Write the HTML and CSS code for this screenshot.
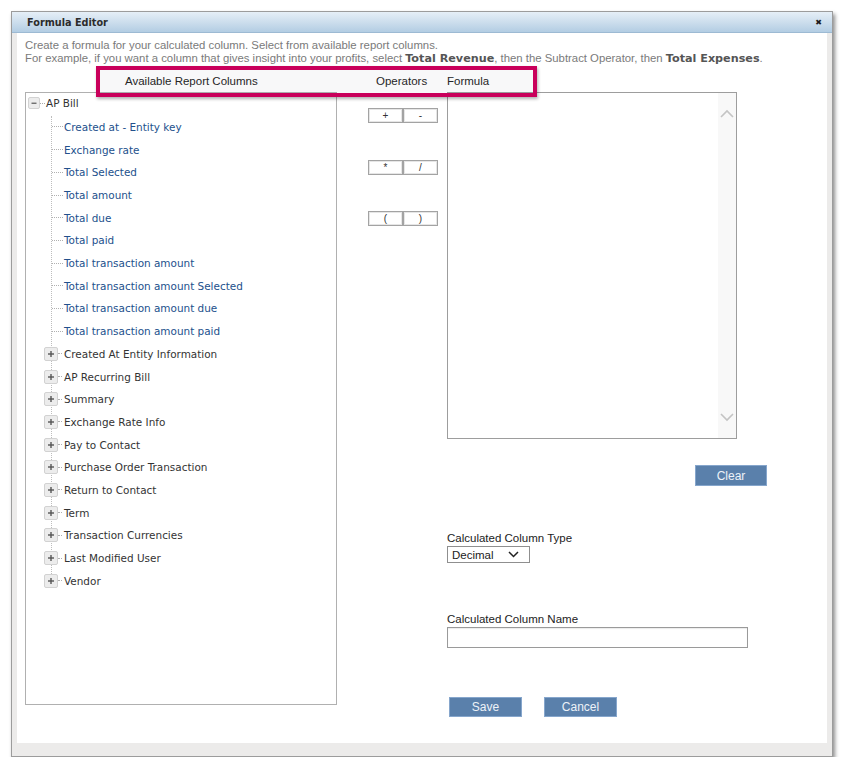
FILE: index.html
```html
<!DOCTYPE html>
<html>
<head>
<meta charset="utf-8">
<title>Formula Editor</title>
<link rel="stylesheet" href="styles.css">
</head>
<body>
<div class="dialog">
  <div class="titlebar">
    <span class="title">Formula Editor</span>
    <span class="close">&#x2716;</span>
  </div>
  <div class="content">
    <p class="desc">Create a formula for your calculated column. Select from available report columns.<br>For example, if you want a column that gives insight into your profits, select <b>Total Revenue</b>, then the Subtract Operator, then <b>Total Expenses</b>.</p>
    <div class="headrow">
      <span class="h-cols">Available Report Columns</span>
      <span class="h-ops">Operators</span>
      <span class="h-formula">Formula</span>
    </div>
    <div class="highlight"></div>
    <div class="main">
      <div class="tree">
        <div class="root">
          <span class="ico minus"><svg width="12" height="12" viewBox="0 0 12 12"><rect x="3" y="5.5" width="6" height="1.6" fill="#666"/></svg></span>
          <span class="rconn"></span>
          <span class="group-label">AP Bill</span>
        </div>
        <ul class="branch">
          <li class="leaf"><span class="conn"></span><span class="leaf-label">Created at - Entity key</span></li>
          <li class="leaf"><span class="conn"></span><span class="leaf-label">Exchange rate</span></li>
          <li class="leaf"><span class="conn"></span><span class="leaf-label">Total Selected</span></li>
          <li class="leaf"><span class="conn"></span><span class="leaf-label">Total amount</span></li>
          <li class="leaf"><span class="conn"></span><span class="leaf-label">Total due</span></li>
          <li class="leaf"><span class="conn"></span><span class="leaf-label">Total paid</span></li>
          <li class="leaf"><span class="conn"></span><span class="leaf-label">Total transaction amount</span></li>
          <li class="leaf"><span class="conn"></span><span class="leaf-label">Total transaction amount Selected</span></li>
          <li class="leaf"><span class="conn"></span><span class="leaf-label">Total transaction amount due</span></li>
          <li class="leaf"><span class="conn"></span><span class="leaf-label">Total transaction amount paid</span></li>
          <li class="node"><span class="ico plus"><svg width="14" height="14" viewBox="0 0 14 14"><rect x="3.5" y="6.2" width="7" height="1.6" fill="#555"/><rect x="6.2" y="3.5" width="1.6" height="7" fill="#555"/></svg></span><span class="gconn"></span><span class="group-label">Created At Entity Information</span></li>
          <li class="node"><span class="ico plus"><svg width="14" height="14" viewBox="0 0 14 14"><rect x="3.5" y="6.2" width="7" height="1.6" fill="#555"/><rect x="6.2" y="3.5" width="1.6" height="7" fill="#555"/></svg></span><span class="gconn"></span><span class="group-label">AP Recurring Bill</span></li>
          <li class="node"><span class="ico plus"><svg width="14" height="14" viewBox="0 0 14 14"><rect x="3.5" y="6.2" width="7" height="1.6" fill="#555"/><rect x="6.2" y="3.5" width="1.6" height="7" fill="#555"/></svg></span><span class="gconn"></span><span class="group-label">Summary</span></li>
          <li class="node"><span class="ico plus"><svg width="14" height="14" viewBox="0 0 14 14"><rect x="3.5" y="6.2" width="7" height="1.6" fill="#555"/><rect x="6.2" y="3.5" width="1.6" height="7" fill="#555"/></svg></span><span class="gconn"></span><span class="group-label">Exchange Rate Info</span></li>
          <li class="node"><span class="ico plus"><svg width="14" height="14" viewBox="0 0 14 14"><rect x="3.5" y="6.2" width="7" height="1.6" fill="#555"/><rect x="6.2" y="3.5" width="1.6" height="7" fill="#555"/></svg></span><span class="gconn"></span><span class="group-label">Pay to Contact</span></li>
          <li class="node"><span class="ico plus"><svg width="14" height="14" viewBox="0 0 14 14"><rect x="3.5" y="6.2" width="7" height="1.6" fill="#555"/><rect x="6.2" y="3.5" width="1.6" height="7" fill="#555"/></svg></span><span class="gconn"></span><span class="group-label">Purchase Order Transaction</span></li>
          <li class="node"><span class="ico plus"><svg width="14" height="14" viewBox="0 0 14 14"><rect x="3.5" y="6.2" width="7" height="1.6" fill="#555"/><rect x="6.2" y="3.5" width="1.6" height="7" fill="#555"/></svg></span><span class="gconn"></span><span class="group-label">Return to Contact</span></li>
          <li class="node"><span class="ico plus"><svg width="14" height="14" viewBox="0 0 14 14"><rect x="3.5" y="6.2" width="7" height="1.6" fill="#555"/><rect x="6.2" y="3.5" width="1.6" height="7" fill="#555"/></svg></span><span class="gconn"></span><span class="group-label">Term</span></li>
          <li class="node"><span class="ico plus"><svg width="14" height="14" viewBox="0 0 14 14"><rect x="3.5" y="6.2" width="7" height="1.6" fill="#555"/><rect x="6.2" y="3.5" width="1.6" height="7" fill="#555"/></svg></span><span class="gconn"></span><span class="group-label">Transaction Currencies</span></li>
          <li class="node"><span class="ico plus"><svg width="14" height="14" viewBox="0 0 14 14"><rect x="3.5" y="6.2" width="7" height="1.6" fill="#555"/><rect x="6.2" y="3.5" width="1.6" height="7" fill="#555"/></svg></span><span class="gconn"></span><span class="group-label">Last Modified User</span></li>
          <li class="node"><span class="ico plus"><svg width="14" height="14" viewBox="0 0 14 14"><rect x="3.5" y="6.2" width="7" height="1.6" fill="#555"/><rect x="6.2" y="3.5" width="1.6" height="7" fill="#555"/></svg></span><span class="gconn"></span><span class="group-label">Vendor</span></li>
        </ul>
      </div>
      <div class="ops">
        <div class="oprow"><span class="opbtn">+</span><span class="opbtn">-</span></div>
        <div class="oprow"><span class="opbtn">*</span><span class="opbtn">/</span></div>
        <div class="oprow"><span class="opbtn">(</span><span class="opbtn">)</span></div>
      </div>
      <div class="right">
        <div class="formula">
          <div class="scroll">
            <svg width="14" height="9" viewBox="0 0 14 9"><path d="M1 8 L7 2 L13 8" fill="none" stroke="#c4c4c4" stroke-width="1.6"/></svg>
            <svg width="14" height="9" viewBox="0 0 14 9"><path d="M1 1 L7 7 L13 1" fill="none" stroke="#c4c4c4" stroke-width="1.6"/></svg>
          </div>
        </div>
        <div class="clear-row"><span class="btn btn-clear">Clear</span></div>
        <label class="lbl lbl-type">Calculated Column Type</label>
        <div class="select"><span>Decimal</span><svg width="11" height="7" viewBox="0 0 11 7"><path d="M1 1 L5.5 5.5 L10 1" fill="none" stroke="#222" stroke-width="1.5"/></svg></div>
        <label class="lbl lbl-name">Calculated Column Name</label>
        <div class="input"></div>
        <div class="actions"><span class="btn btn-save">Save</span><span class="btn btn-cancel">Cancel</span></div>
      </div>
    </div>
  </div>
</div>
</body>
</html>
```
FILE: styles.css
```css
html, body {
  margin: 0;
  padding: 0;
  background: #ffffff;
}

.dialog {
  box-sizing: border-box;
  margin: 11px 0 0 11px;
  width: 822px;
  height: 746px;
  border: 1px solid #9c9c9c;
  background: #ecebea;
  padding: 0 5px 13px 5px;
  box-shadow: 2px 3px 4px rgba(0, 0, 0, 0.45);
  display: flex;
  flex-direction: column;
}

.titlebar {
  margin: 0 -5px;
  height: 21px;
  box-sizing: border-box;
  background: linear-gradient(#e6eff7, #b3cde3);
  border-bottom: 1px solid #9dbad3;
  display: flex;
  align-items: center;
  justify-content: space-between;
  padding: 0 10px 0 15px;
}

.title {
  font-family: "DejaVu Sans", sans-serif;
  font-weight: bold;
  font-size: 9.7px;
  color: #2c2c2c;
}

.close {
  font-family: "DejaVu Sans", sans-serif;
  font-size: 8px;
  color: #1a1a1a;
}

.content {
  position: relative;
  flex: 1;
  background: #ffffff;
  padding: 6px 8px 0 8px;
}

.desc {
  margin: 0;
  font-family: "Liberation Sans", Arial, sans-serif;
  font-size: 11.35px;
  line-height: 13px;
  color: #7a7a7a;
}

.desc b {
  font-family: "DejaVu Sans", sans-serif;
  font-size: 11.2px;
  color: #555555;
}

.headrow {
  margin-top: 5px;
  height: 22px;
  display: flex;
  align-items: center;
  font-family: "Liberation Sans", Arial, sans-serif;
  font-size: 11.5px;
  color: #222;
}

.h-cols { width: 312px; padding-left: 100px; box-sizing: border-box; }
.h-ops { width: 110px; padding-left: 39px; box-sizing: border-box; }

.highlight {
  position: absolute;
  left: 79px;
  top: 33px;
  width: 441px;
  height: 31px;
  box-sizing: border-box;
  border: 4px solid #c9005b;
  background: rgba(120, 120, 140, 0.05);
  box-shadow: 1px 2px 3px rgba(0, 0, 0, 0.3);
}

.main {
  display: flex;
  align-items: flex-start;
}

.tree {
  box-sizing: border-box;
  width: 312px;
  height: 613px;
  border: 1px solid #b0b0b0;
  font-family: "DejaVu Sans", sans-serif;
  font-size: 10.45px;
}

.root {
  height: 20px;
  display: flex;
  align-items: center;
  padding-left: 2px;
}

.ico {
  display: inline-flex;
  align-items: center;
  justify-content: center;
  box-sizing: border-box;
  background: #ececec;
  border: 1px solid #d2d2d2;
  border-radius: 2px;
}

.ico.minus { width: 12px; height: 12px; }
.ico.plus { width: 14px; height: 14px; margin-left: -8px; flex: none; }

.rconn {
  width: 5px;
  border-top: 1px dotted #aaa;
  margin-right: 1px;
}

.group-label { color: #333333; }

.branch {
  list-style: none;
  margin: 2.6px 0 0 25px;
  padding: 0;
  border-left: 1px dotted #bdbdbd;
  height: 466px;
}

.branch li {
  height: 22.7px;
  display: flex;
  align-items: center;
}

.conn {
  width: 11px;
  border-top: 1px dotted #b0b0b0;
  margin-right: 1px;
}

.gconn {
  width: 4px;
  border-top: 1px dotted #b0b0b0;
  margin-right: 2px;
}

.leaf-label { color: #22508c; }

.ops {
  width: 110px;
  box-sizing: border-box;
  padding: 16px 0 0 31px;
  display: flex;
  flex-direction: column;
  gap: 36.5px;
}

.oprow { display: flex; }

.opbtn {
  box-sizing: border-box;
  width: 35px;
  height: 15px;
  border: 1px solid #a3a3a3;
  box-shadow: inset 0 0 0 1px #e6e6e6;
  background: #fff;
  font-family: "Liberation Sans", Arial, sans-serif;
  font-size: 10px;
  line-height: 13px;
  text-align: center;
  color: #333;
}

.right {
  width: 320px;
  display: flex;
  flex-direction: column;
  align-items: flex-start;
  font-family: "Liberation Sans", Arial, sans-serif;
}

.formula {
  box-sizing: border-box;
  width: 290px;
  height: 347px;
  border: 1px solid #9d9d9d;
  display: flex;
  justify-content: flex-end;
}

.scroll {
  width: 18px;
  background: #f8f8f8;
  display: flex;
  flex-direction: column;
  justify-content: space-between;
  align-items: center;
  padding: 16px 0 16px;
}

.clear-row {
  width: 320px;
  display: flex;
  justify-content: flex-end;
  margin-top: 26px;
}

.btn {
  box-sizing: border-box;
  height: 21px;
  width: 72px;
  background: #5a80ab;
  border: 1px solid #86a6cc;
  color: #edf2f8;
  font-size: 12px;
  display: inline-flex;
  align-items: center;
  justify-content: center;
}

.lbl {
  font-size: 11.5px;
  line-height: 14px;
  color: #222;
}

.lbl-type { margin-top: 45px; }

.select {
  margin-top: 1px;
  box-sizing: border-box;
  width: 83px;
  height: 17px;
  border: 1px solid #8f8f8f;
  display: flex;
  align-items: center;
  justify-content: space-between;
  padding: 0 10px 0 4px;
  font-size: 11.5px;
  color: #222;
}

.lbl-name { margin-top: 49px; }

.input {
  margin-top: 1px;
  box-sizing: border-box;
  width: 301px;
  height: 21px;
  border: 1px solid #9a9a9a;
  box-shadow: inset 0 1px 1px rgba(0,0,0,0.08);
}

.actions {
  margin-top: 49px;
  margin-left: 2px;
  display: flex;
  gap: 22px;
}

.btn-save, .btn-cancel { width: 73px; height: 20px; }
```
